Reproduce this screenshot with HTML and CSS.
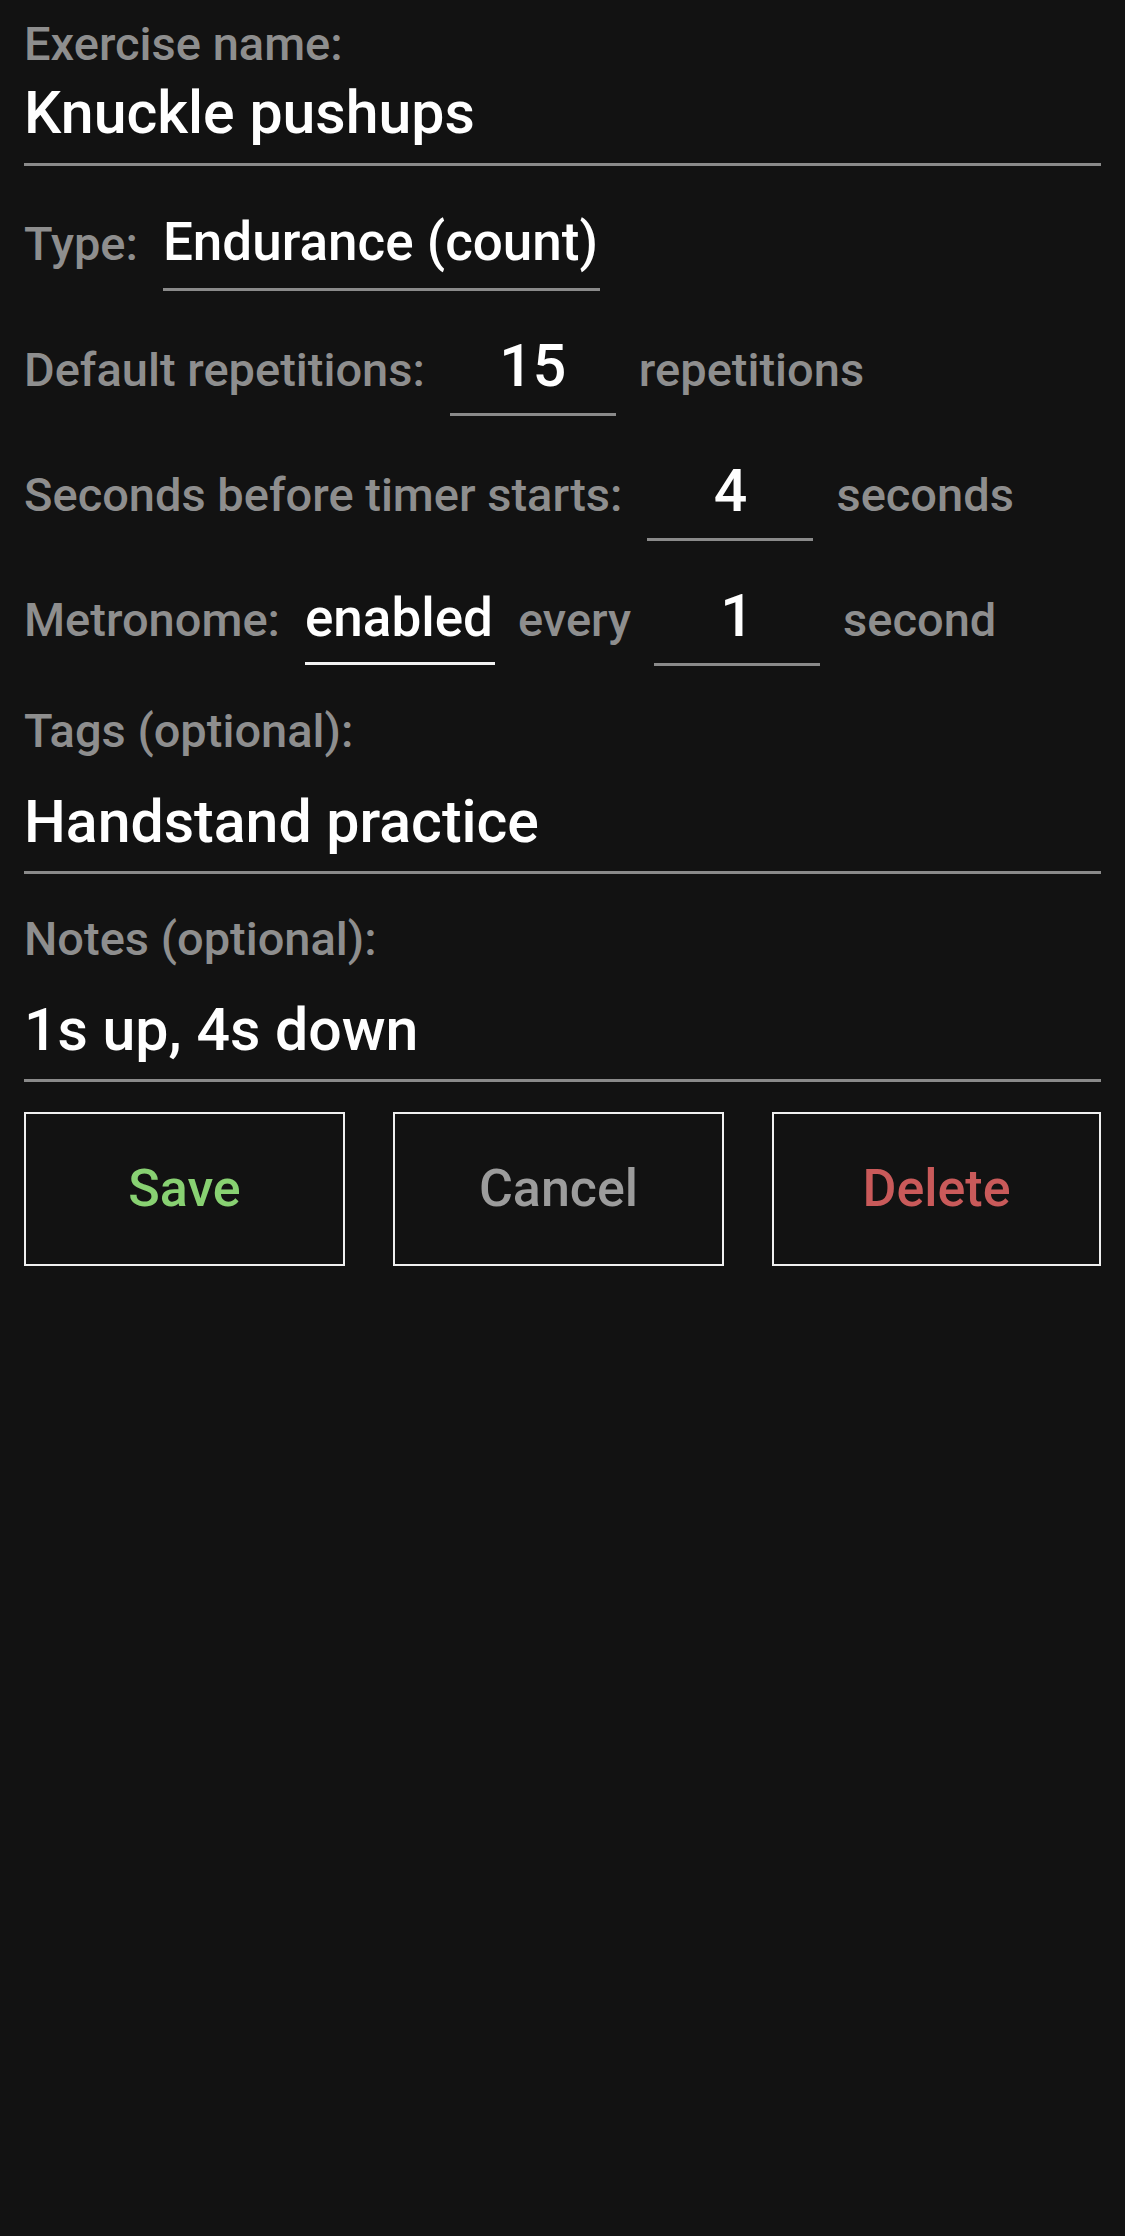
FILE: index.html
```html
<!DOCTYPE html>
<html lang="en">
<head>
<meta charset="utf-8">
<title>Edit exercise</title>
<link rel="stylesheet" href="styles.css">
</head>
<body>
<div class="screen">
  <div class="field field-name">
    <div class="label">Exercise name:</div>
    <div class="input input-name">Knuckle pushups</div>
  </div>

  <div class="row row-type">
    <span class="label lead">Type:</span>
    <span class="spinner spinner-type">Endurance (count)</span>
  </div>

  <div class="row row-num row-first">
    <span class="label lead">Default repetitions:</span>
    <span class="num">15</span>
    <span class="label">repetitions</span>
  </div>

  <div class="row row-num">
    <span class="label lead">Seconds before timer starts:</span>
    <span class="num">4</span>
    <span class="label">seconds</span>
  </div>

  <div class="row row-num">
    <span class="label lead">Metronome:</span>
    <span class="spinner spinner-metro">enabled</span>
    <span class="label">every</span>
    <span class="num">1</span>
    <span class="label">second</span>
  </div>

  <div class="field field-tags">
    <div class="label">Tags (optional):</div>
    <div class="input input-loose">Handstand practice</div>
  </div>

  <div class="field field-notes">
    <div class="label">Notes (optional):</div>
    <div class="input input-loose">1s up, 4s down</div>
  </div>

  <div class="buttons">
    <div class="btn btn-save">Save</div>
    <div class="btn btn-cancel">Cancel</div>
    <div class="btn btn-delete">Delete</div>
  </div>
</div>
</body>
</html>
```

FILE: styles.css
```css
html, body {
  margin: 0;
  padding: 0;
  background: #121212;
}

body {
  width: 1125px;
  min-height: 2236px;
  font-family: Roboto, "Noto Sans", "Liberation Sans", sans-serif;
  font-weight: 500;
  color: #ffffff;
}

.screen {
  padding: 17px 24px 0 24px;
}

.label {
  font-size: 47px;
  line-height: 54px;
  color: #8e8e8e;
  white-space: nowrap;
}

.input {
  font-size: 59px;
  line-height: 68px;
  color: #ffffff;
  border-bottom: 3px solid #8a8a8a;
  padding-bottom: 16px;
  margin-top: 8px;
}

.input-loose {
  margin-top: 30px;
  padding-bottom: 15px;
}

.field-tags {
  margin-top: 38px;
}

.field-notes {
  margin-top: 38px;
}

.row {
  display: flex;
  align-items: baseline;
  gap: 23px;
}

.row .lead {
  margin-right: 2px;
}

.row-type {
  margin-top: 46px;
}

.row-num {
  margin-top: 41px;
}

.spinner {
  color: #ffffff;
  white-space: nowrap;
}

.spinner-type {
  font-size: 53px;
  line-height: 60px;
  padding-bottom: 16px;
  padding-right: 2px;
  border-bottom: 3px solid #8a8a8a;
}

.spinner-metro {
  font-size: 53px;
  line-height: 60px;
  padding-bottom: 14px;
  padding-right: 2px;
  border-bottom: 3px solid #f2f2f2;
}

.num {
  width: 166px;
  flex: 0 0 166px;
  text-align: center;
  font-size: 59px;
  line-height: 68px;
  padding-bottom: 13px;
  border-bottom: 3px solid #8a8a8a;
  color: #ffffff;
}

.buttons {
  margin-top: 30px;
  display: grid;
  grid-template-columns: 321px 331px 329px;
  column-gap: 48px;
}

.btn {
  box-sizing: border-box;
  height: 154px;
  border: 2px solid #f0f0f0;
  display: flex;
  align-items: center;
  justify-content: center;
  font-size: 52px;
  line-height: 62px;
}

.btn-save {
  color: #88d172;
}

.btn-cancel {
  color: #9c9c9c;
}

.btn-delete {
  color: #c95a5a;
}
```
